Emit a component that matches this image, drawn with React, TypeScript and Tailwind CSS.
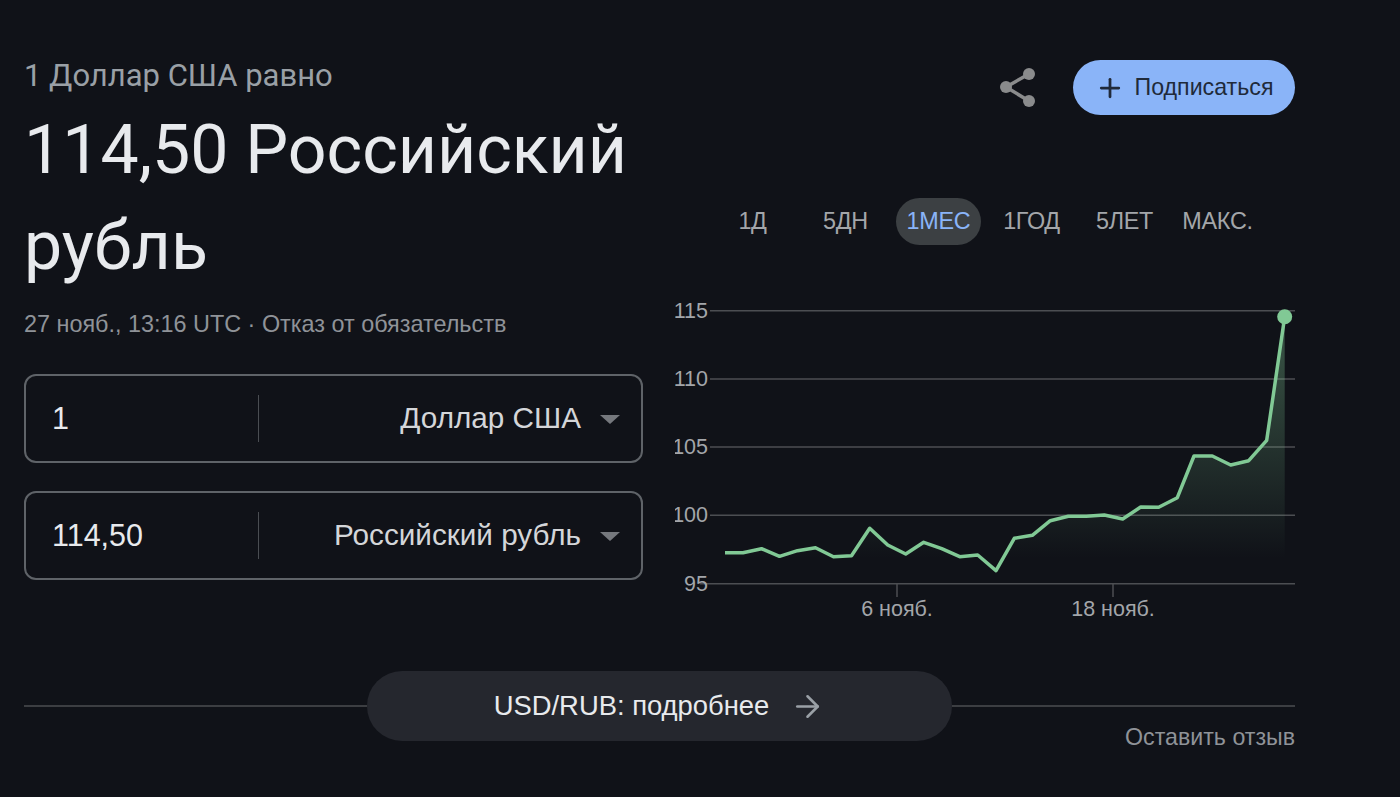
import React from 'react';
import { ArrowRight, Plus } from 'lucide-react';

const ranges = ['1Д', '5ДН', '1МЕС', '1ГОД', '5ЛЕТ', 'МАКС.'];

const points = [
  [725, 552.7], [743, 552.7], [761.5, 548.7], [779.5, 556.3], [797.5, 550.7], [815.5, 547.7], [833.5, 556.7], [851.5, 555.7],
  [869.7, 528.3], [887.7, 545], [905.7, 554], [923.7, 542.3], [941.7, 548.7], [959.7, 556.7], [977.7, 555], [996, 570.7],
  [1014.3, 538.3], [1032.3, 535.3], [1050.3, 520.7], [1068.3, 516.3], [1086.3, 516.3], [1104.3, 515], [1122.7, 519],
  [1140.7, 507], [1158.7, 507.3], [1177.3, 497.7], [1194, 456], [1212.3, 456], [1230.7, 465], [1248.7, 460.7], [1266.7, 440.3], [1284.7, 316.7],
];

// chart svg starts at x=675, y=296
const line = points.map(([x, y]) => `${x - 675},${y - 296}`).join(' ');
const area = `${line} 609.7,288 50,288`;

const grid = [
  { label: '115', y: 14.7, x1: 35 },
  { label: '110', y: 83, x1: 35 },
  { label: '105', y: 151, x1: 35 },
  { label: '100', y: 219.3, x1: 35 },
  { label: '95', y: 287.7, x1: 25 },
];

function Converter({ value, currency }: { value: string; currency: string }) {
  return (
    <div className="flex h-[89px] items-center rounded-xl border-2 border-[#5f6368]">
      <div className="w-[232px] pl-[26px] text-[30.5px] text-[#e8eaed]">{value}</div>
      <div className="h-[47px] w-px bg-[#4a4d52]" />
      <div className="flex flex-1 items-center justify-end pr-[21px]">
        <span className="text-[29.7px] text-[#d4d6d9]">{currency}</span>
        <div className="ml-[19px] mt-[2px] h-0 w-0 border-x-[10px] border-t-[9px] border-x-transparent border-t-[#75787d]" />
      </div>
    </div>
  );
}

export default function App() {
  return (
    <div className="h-[797px] w-[1400px] overflow-hidden bg-[#101218] pl-[24px] pr-[105px] font-['Liberation_Sans',sans-serif]">
      <div className="flex">
        <div className="w-[619px] shrink-0 pt-[58px]">
          <div className="font-['Roboto',sans-serif] text-[31px] leading-[36px] text-[#9aa0a6]">1 Доллар США равно</div>
          <h1 className="mt-[8px] font-['Roboto',sans-serif] text-[68px] leading-[96px] text-[#e8eaed]">114,50 Российский рубль</h1>
          <div className="mt-[15px] text-[23.4px] leading-[30px] text-[#8f9398]">27 нояб., 13:16 UTC · Отказ от обязательств</div>
          <div className="mt-[35px] flex flex-col gap-[28px]">
            <Converter value="1" currency="Доллар США" />
            <Converter value="114,50" currency="Российский рубль" />
          </div>
        </div>

        <div className="ml-[32px] w-[620px] shrink-0">
          <div className="mt-[60px] flex h-[55px] items-center justify-end">
            <svg width="40" height="42" viewBox="0 0 40 42" fill="#8a8b8c" stroke="#8a8b8c" className="mr-[33px]">
              <path d="M29 7 L6 20 L29 34" fill="none" strokeWidth="3.5" />
              <circle cx="29" cy="7" r="6" stroke="none" />
              <circle cx="6" cy="20" r="6" stroke="none" />
              <circle cx="29" cy="34" r="6" stroke="none" />
            </svg>
            <button className="flex h-[55px] w-[222px] items-center justify-center gap-[10px] rounded-full bg-[#8ab4f8] text-[23.2px] text-[#202a3a]">
              <Plus size={30} strokeWidth={2.2} />
              Подписаться
            </button>
          </div>

          <div className="ml-[31px] mt-[83px] flex h-[47px] items-center">
            {ranges.map((r) => (
              <div key={r} className="flex w-[93px] justify-center">
                {r === '1МЕС' ? (
                  <span className="flex h-[47px] w-[85px] items-center justify-center rounded-full bg-[#3c4043] text-[23.4px] tracking-[-0.3px] text-[#8ab4f8]">{r}</span>
                ) : (
                  <span className="text-[23.4px] tracking-[-0.3px] text-[#a3a6aa]">{r}</span>
                )}
              </div>
            ))}
          </div>

          <svg width="620" height="330" viewBox="0 0 620 330" className="mt-[51px] block">
            <defs>
              <linearGradient id="fade" gradientUnits="userSpaceOnUse" x1="0" y1="60" x2="0" y2="262">
                <stop offset="0" stopColor="#81c995" stopOpacity="0.32" />
                <stop offset="1" stopColor="#81c995" stopOpacity="0" />
              </linearGradient>
            </defs>
            {grid.map((g) => (
              <g key={g.label}>
                <line x1={g.x1} x2="620" y1={g.y} y2={g.y} stroke="#4c4e52" strokeWidth="1.5" />
                <text x="33" y={g.y + 7} textAnchor="end" fontSize="21.5" fill="#a3a6aa">{g.label}</text>
              </g>
            ))}
            <line x1="222" x2="222" y1="288" y2="301" stroke="#4c4e52" strokeWidth="1.5" />
            <line x1="438" x2="438" y1="288" y2="301" stroke="#4c4e52" strokeWidth="1.5" />
            <text x="222" y="320" textAnchor="middle" fontSize="21.5" fill="#a3a6aa">6 нояб.</text>
            <text x="438" y="320" textAnchor="middle" fontSize="21.5" fill="#a3a6aa">18 нояб.</text>
            <polygon points={area} fill="url(#fade)" />
            <polyline points={line} fill="none" stroke="#81c995" strokeWidth="3.5" strokeLinejoin="round" />
            <circle cx="609.7" cy="20.7" r="7.5" fill="#81c995" />
          </svg>
        </div>
      </div>

      <div className="mt-[45px] flex items-center">
        <div className="h-[1.5px] flex-1 bg-[#3c3e42]" />
        <a className="flex h-[70px] w-[585px] items-center justify-center gap-[21px] rounded-full bg-[#25272e] text-[27.4px] text-[#e8eaed]">
          USD/RUB: подробнее
          <ArrowRight size={35} strokeWidth={1.8} className="text-[#9aa0a6]" />
        </a>
        <div className="h-[1.5px] flex-1 bg-[#3c3e42]" />
      </div>
      <div className="-mt-[18px] text-right text-[23.2px] leading-[28px] text-[#8f9398]">Оставить отзыв</div>
    </div>
  );
}
